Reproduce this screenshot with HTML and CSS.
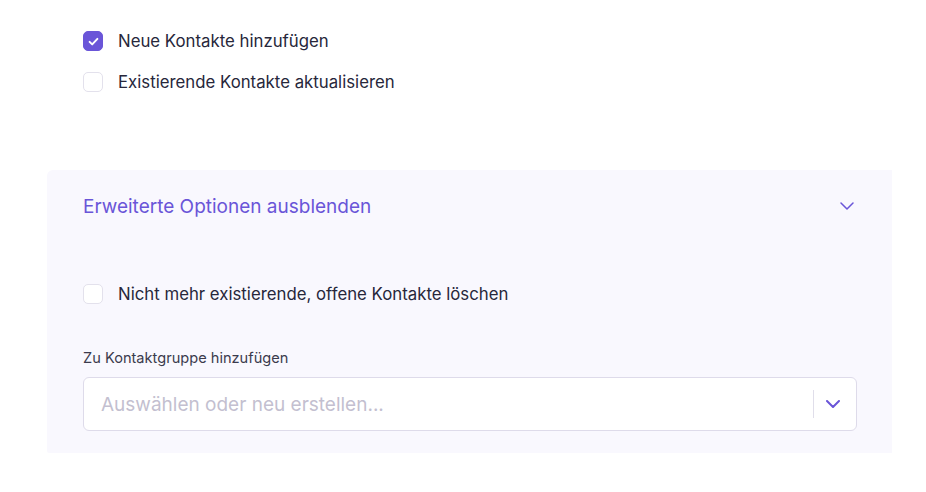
FILE: index.html
```html
<!DOCTYPE html>
<html lang="de">
<head>
  <meta charset="UTF-8">
  <meta name="viewport" content="width=device-width, initial-scale=1.0">
  <title>Kontakte importieren</title>
  <link rel="stylesheet" href="styles.css">
</head>
<body>
  <div class="options">
    <label class="check">
      <span class="box checked">
        <svg viewBox="0 0 20 20" width="13" height="13"><path d="M4 10.5l4 4 8-8.5" fill="none" stroke="#fff" stroke-width="3" stroke-linecap="round" stroke-linejoin="round"/></svg>
      </span>
      Neue Kontakte hinzufügen
    </label>
    <label class="check">
      <span class="box"></span>
      Existierende Kontakte aktualisieren
    </label>
  </div>

  <div class="advanced">
    <div class="advanced-head">
      <span>Erweiterte Optionen ausblenden</span>
      <svg class="chevron" viewBox="0 0 14 8" width="14" height="8"><path d="M1 1l6 6 6-6" fill="none" stroke="#6a55d8" stroke-width="1.5" stroke-linecap="round" stroke-linejoin="round"/></svg>
    </div>

    <label class="check">
      <span class="box"></span>
      Nicht mehr existierende, offene Kontakte löschen
    </label>

    <div class="field">
      <div class="field-label">Zu Kontaktgruppe hinzufügen</div>
      <div class="select">
        <span class="placeholder">Auswählen oder neu erstellen...</span>
        <span class="divider"></span>
        <svg class="chevron" viewBox="0 0 14 8" width="14" height="8"><path d="M1 1l6 6 6-6" fill="none" stroke="#6a55d8" stroke-width="2" stroke-linecap="round" stroke-linejoin="round"/></svg>
      </div>
    </div>
  </div>
</body>
</html>
```

FILE: styles.css
```css
body {
  margin: 0;
  background: #fff;
  font-family: Inter, "Noto Sans", sans-serif;
  color: #27273b;
}

.options {
  padding: 31px 0 0 83px;
  display: flex;
  flex-direction: column;
  gap: 21px;
}

.check {
  display: flex;
  align-items: center;
  gap: 15px;
  font-size: 16.8px;
  height: 20px;
  cursor: pointer;
}

.box {
  width: 18px;
  height: 18px;
  border: 1px solid #e3e1ec;
  border-radius: 5px;
  background: #fff;
  display: flex;
  align-items: center;
  justify-content: center;
  flex-shrink: 0;
}

.box.checked {
  background: #6a55d8;
  border-color: #6a55d8;
}

.advanced {
  margin: 78px 34px 0 47px;
  background: #f9f8fe;
  border-radius: 6px 0 0 2px;
  padding: 23px 35px 22px 36px;
}

.advanced-head {
  display: flex;
  align-items: center;
  justify-content: space-between;
  color: #6a55d8;
  font-size: 19px;
  height: 26px;
  padding-right: 3px;
}

.advanced .check {
  margin-top: 65px;
}

.field {
  margin-top: 45px;
}

.field-label {
  font-size: 14.6px;
  color: #3b3b4d;
  margin-bottom: 10px;
}

.select {
  height: 54px;
  box-sizing: border-box;
  border: 1px solid #dedbea;
  border-radius: 6px;
  background: #fff;
  display: flex;
  align-items: center;
  padding: 0 16px 0 17px;
}

.placeholder {
  flex: 1;
  font-size: 19px;
  color: #c3bfd0;
}

.divider {
  width: 1px;
  height: 28px;
  background: #e0deea;
  margin-right: 12px;
}
```
